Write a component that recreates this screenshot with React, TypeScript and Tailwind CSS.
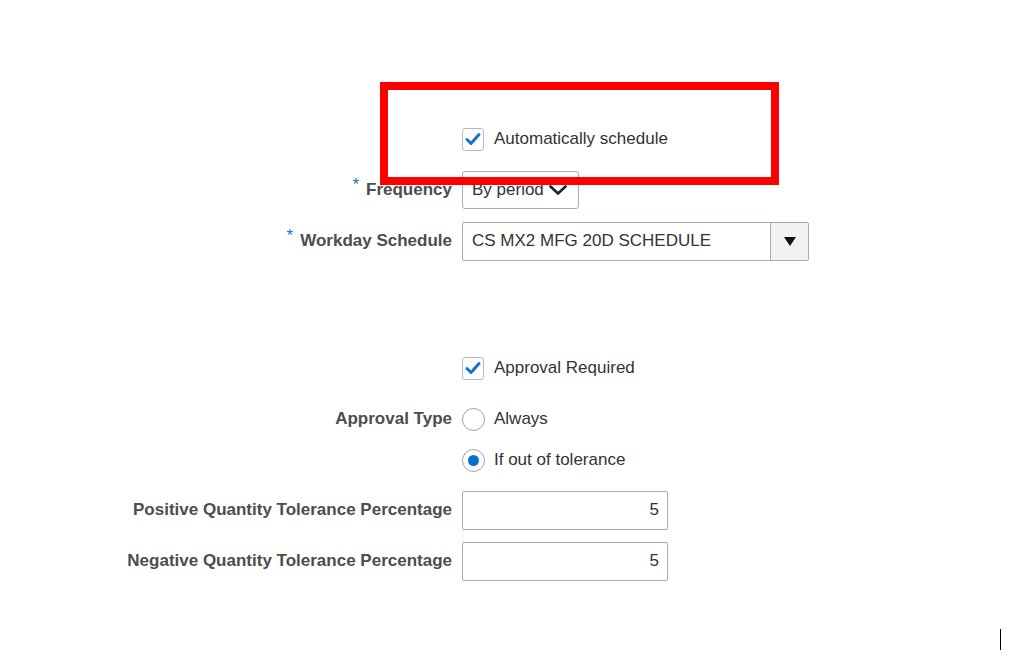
import React from 'react';

const font = { fontFamily: '"Liberation Sans", Arial, sans-serif' };

const Check = () => (
  <span className="flex h-[23px] w-[22px] items-center justify-center rounded-[3px] border border-[#b5b9bd] bg-white">
    <svg width="16" height="14" viewBox="0 0 16 14">
      <path d="M2 7.5 L6 11.5 L14 2.5" fill="none" stroke="#1b72c4" strokeWidth="3" strokeLinecap="round" strokeLinejoin="round" />
    </svg>
  </span>
);

const Radio = ({ on }: { on?: boolean }) => (
  <span className="flex h-[23px] w-[23px] items-center justify-center rounded-full border border-[#9da3a8] bg-white">
    {on && <span className="h-[11px] w-[11px] rounded-full bg-[#0a6fd0]" />}
  </span>
);

const Label = ({ text, req }: { text: string; req?: boolean }) => (
  <div className="w-[462px] shrink-0 pr-[10px] text-right text-[17px] font-bold text-[#4d4d4d]">
    {req && <span className="relative top-[-5px] mr-[7px] font-normal text-[#1b72c4]">*</span>}
    {text}
  </div>
);

const Row = ({ label, req, className, children }: { label?: string; req?: boolean; className: string; children: React.ReactNode }) => (
  <div className={`flex h-[38px] items-center ${className}`}>
    {label ? <Label text={label} req={req} /> : <div className="w-[462px] shrink-0" />}
    {children}
  </div>
);

export default function App() {
  return (
    <div className="relative h-[655px] w-[1022px] overflow-hidden bg-white text-[#333]" style={font}>
      <div className="flex flex-col pt-[120px]">
        <Row className="">
          <div className="flex items-center gap-[10px] text-[17px]">
            <Check />
            <span>Automatically schedule</span>
          </div>
        </Row>

        <Row className="mt-[13px]" label="Frequency" req>
          <div className="flex h-[38px] w-[117px] items-center gap-[5px] rounded-[3px] border border-[#a5acb2] bg-white pl-[9px] text-[17px]">
            <span>By period</span>
            <svg width="18" height="12" viewBox="0 0 18 12">
              <path d="M1.5 2.5 L9 9.5 L16.5 2.5" fill="none" stroke="#222" strokeWidth="2.6" strokeLinecap="round" />
            </svg>
          </div>
        </Row>

        <Row className="mt-[13px]" label="Workday Schedule" req>
          <div className="flex h-[39px] w-[347px] rounded-[2px] border border-[#a5acb2] bg-white text-[17px]">
            <div className="flex flex-1 items-center pl-[9px]">CS MX2 MFG 20D SCHEDULE</div>
            <div className="flex w-[38px] items-center justify-center border-l border-[#a5acb2] bg-[#f1f2f3]">
              <svg width="12" height="9" viewBox="0 0 12 9">
                <path d="M0 0 H12 L6 9 Z" fill="#111" />
              </svg>
            </div>
          </div>
        </Row>

        <Row className="mt-[89px]">
          <div className="flex items-center gap-[10px] text-[17px]">
            <Check />
            <span>Approval Required</span>
          </div>
        </Row>

        <Row className="mt-[13px]" label="Approval Type">
          <div className="flex items-center gap-[9px] text-[17px]">
            <Radio />
            <span>Always</span>
          </div>
        </Row>

        <Row className="mt-[3px]">
          <div className="flex items-center gap-[9px] text-[17px]">
            <Radio on />
            <span>If out of tolerance</span>
          </div>
        </Row>

        <Row className="mt-[12px]" label="Positive Quantity Tolerance Percentage">
          <div className="flex h-[39px] w-[206px] items-center justify-end rounded-[2px] border border-[#a5acb2] bg-white pr-[8px] text-[17px]">5</div>
        </Row>

        <Row className="mt-[13px]" label="Negative Quantity Tolerance Percentage">
          <div className="flex h-[39px] w-[206px] items-center justify-end rounded-[2px] border border-[#a5acb2] bg-white pr-[8px] text-[17px]">5</div>
        </Row>
      </div>

      {/* highlight box drawn over the form */}
      <div className="pointer-events-none absolute left-[380px] top-[82px] h-[103px] w-[399px] border-[8px] border-[#ff0000]" />

      <div className="absolute left-[1000px] top-[629px] h-[21px] w-px bg-black" />
    </div>
  );
}
